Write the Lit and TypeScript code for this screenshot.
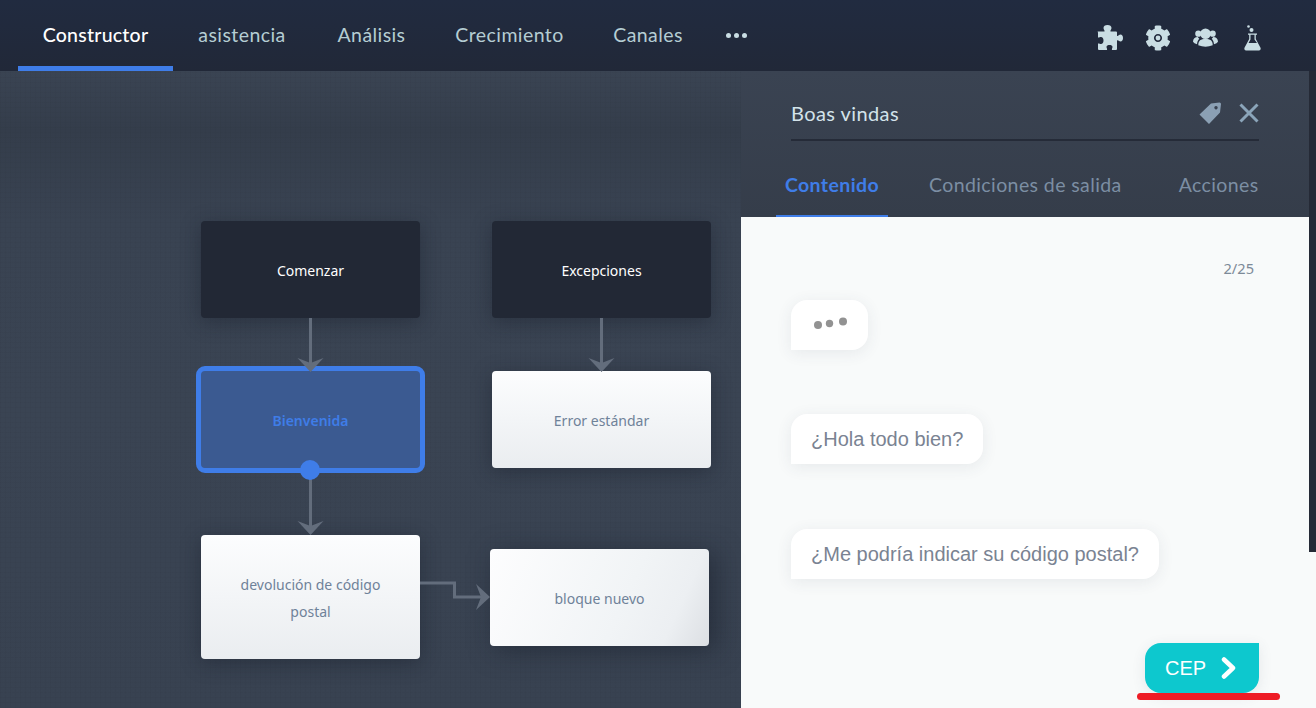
import { LitElement, html, css, svg } from "lit";
import { customElement } from "lit/decorators.js";

const PUZZLE = "M1 6.500H7.500C8 5.500 6.500 4.500 6.500 3C6.500 1 8 0 10.500 0C13 0 14.500 1 14.500 3C14.500 4.500 13 5.500 13.500 6.500H19Q20 6.500 20 7.500V11C21 11.500 22 9.500 23.500 9.500C25 9.500 26 11 26 13C26 15 25 16.500 23.500 16.500C22 16.500 21 14.800 20 15.500V24Q20 25 19 25H15C14.500 24 15.500 23 15.500 22C15.500 20.500 14 20 12.500 20C11 20 9.500 20.500 9.500 22C9.500 23 10.500 24 10 25H2Q1 25 1 24V18.500C2.500 18.500 3 19 4 19C5.500 19 6.500 17.500 6.500 15.500C6.500 13.500 5.500 12 4 12C3 12 2.500 12.500 1 12.500V7.500Q0 6.500 1 6.500Z";
const COG = "M487.4 315.7l-42.6-24.6c4.3-23.2 4.3-47 0-70.2l42.6-24.6c4.9-2.8 7.1-8.6 5.5-14-11.1-35.6-30-67.8-54.7-94.6-3.8-4.1-10-5.1-14.8-2.3L380.8 110c-17.9-15.4-38.5-27.3-60.8-35.1V25.8c0-5.6-3.9-10.5-9.4-11.7-36.7-8.2-74.3-7.8-109.2 0-5.5 1.2-9.4 6.1-9.4 11.7V75c-22.2 7.9-42.8 19.8-60.8 35.1L88.7 85.5c-4.9-2.8-11-1.9-14.8 2.3-24.7 26.7-43.6 58.9-54.7 94.6-1.7 5.4.6 11.2 5.5 14L67.3 221c-4.3 23.2-4.3 47 0 70.2l-42.6 24.6c-4.9 2.8-7.1 8.6-5.5 14 11.1 35.6 30 67.8 54.7 94.6 3.8 4.1 10 5.1 14.8 2.3l42.6-24.6c17.9 15.4 38.5 27.3 60.8 35.1v49.2c0 5.6 3.9 10.5 9.4 11.7 36.7 8.2 74.3 7.8 109.2 0 5.5-1.2 9.4-6.1 9.4-11.7v-49.2c22.2-7.9 42.8-19.8 60.8-35.1l42.6 24.6c4.9 2.8 11 1.9 14.8-2.3 24.7-26.7 43.6-58.9 54.7-94.6 1.5-5.5-.7-11.3-5.6-14.1zM256 336c-44.1 0-80-35.9-80-80s35.9-80 80-80 80 35.9 80 80-35.9 80-80 80z";

const TABS: [string, number][] = [["asistencia", 138], ["Análisis", 121], ["Crecimiento", 155], ["Canales", 122]];

const arrowHead = (x: number, y: number, rot: number) => svg`<path transform="translate(${x} ${y}) rotate(${rot})" d="M0 0L-13 -14L0 -9L13 -14Z" />`;

@customElement("app-root")
export class AppRoot extends LitElement {
  static styles = css`
    :host { display: block; width: 1316px; height: 708px; overflow: hidden; position: relative; font-family: "Noto Sans", sans-serif; }
    .nav { height: 71px; background: linear-gradient(#212b40, #212838); display: flex; align-items: stretch; padding-left: 18px; box-sizing: border-box; }
    .tab { display: flex; align-items: center; justify-content: center; font-family: "Lato", sans-serif; font-size: 19.500px; color: #b5cdd3; letter-spacing: 0.42px; box-sizing: border-box; border-bottom: 5px solid transparent; padding-top: 3px; white-space: nowrap; }
    .tab.on { color: #fff; border-bottom-color: #3f7de8; font-weight: 500; width: 155px; letter-spacing: .25px; }
    .more { display: flex; align-items: center; gap: 3px; margin-left: 17px; padding-bottom: 1px; }
    .more i { width: 5px; height: 5px; border-radius: 50%; background: #c9dde3; }
    .spacer { flex: 1; }
    .icons { display: flex; align-items: center; padding-right: 54px; padding-top: 4px; color: #c9dde3; }
    .icons svg { display: block; fill: currentColor; }
    .i-cog { margin-left: 22px; }
    .i-users { margin-left: 22px; }
    .i-flask { margin-left: 26px; }
    .main { display: flex; height: 637px; }
    .canvas { flex: 0 0 741px; position: relative; background-color: #3a4352;
      background-image:
        repeating-linear-gradient(0deg, rgba(0,0,0,.025) 0 1px, transparent 1px 5px),
        repeating-linear-gradient(90deg, rgba(0,0,0,.025) 0 1px, transparent 1px 5px),
        linear-gradient(#3a4453 0, #343d4b 60px, #394352 150px, #3a4453 340px, #384251 637px); }
    .node { position: absolute; display: flex; align-items: center; justify-content: center; text-align: center; box-sizing: border-box; width: 219px; height: 97px; border-radius: 4px; font-size: 14px; line-height: 27px; color: #6f8299; background: linear-gradient(#fcfdfe, #eaedf0); box-shadow: 0 4px 20px rgba(20,26,38,.4); padding: 2px 30px 0; }
    .node.dark { background: #222835; color: #fff; }
    .node.sel { width: 229px; height: 107px; border: 5px solid #3f7de8; border-radius: 9px; background: #3b5a91; color: #3f7de8; font-weight: 600; box-shadow: none; }
    .node.shade { background: linear-gradient(115deg, #fdfdfe 0, #f1f4f6 60%, #eceff2 82%, #dcdfe3 100%); box-shadow: 6px 4px 26px rgba(20,26,38,.5); }
    .dot { position: absolute; left: 300px; top: 389px; width: 20px; height: 20px; border-radius: 50%; background: #3f7de8; }
    .links { position: absolute; inset: 0; width: 741px; height: 637px; fill: #636d7c; }
    .links .ln { fill: none; stroke: #636d7c; stroke-width: 3; }
    .panel { flex: 1; display: flex; flex-direction: column; background: #f8fafa; min-width: 0; }
    .phead { height: 146px; background: linear-gradient(#3a4352, #353d4a); box-sizing: border-box; padding: 0 7px 0 35px; display: flex; flex-direction: column; }
    .title { margin: 0 50px 0 15px; height: 70px; border-bottom: 2px solid #252b38; display: flex; align-items: center; justify-content: space-between; box-sizing: border-box; font-family: "Lato", sans-serif; font-size: 20px; letter-spacing: .42px; color: #d3e3ea; padding-top: 16px; }
    .title .acts { display: flex; align-items: center; gap: 17px; }
    .title svg { display: block; }
    .i-tag { margin-left: -2px; }
    .ptabs { flex: 1; display: flex; align-items: stretch; font-family: "Lato", sans-serif; font-size: 19.500px; letter-spacing: .4px; color: #7c8ea3; }
    .ptab { display: flex; align-items: center; justify-content: center; padding-top: 12px; box-sizing: border-box; border-bottom: 2px solid transparent; white-space: nowrap; }
    .ptab.on { width: 112px; color: #3f7de8; font-weight: 700; border-bottom-color: #3f7de8; }
    .ptab.c { margin-left: 41px; }
    .ptab.a { margin-left: 57px; }
    .pbody { flex: 1; padding: 0 57px 0 50px; display: flex; flex-direction: column; align-items: flex-start; position: relative; }
    .count { align-self: flex-end; margin-top: 42px; font-size: 14.600px; line-height: 19px; color: #7d8a98; margin-right: 5px; }
    .bubble { box-sizing: border-box; height: 50px; background: #fff; border-radius: 16px 16px 16px 0; box-shadow: 0 3px 16px rgba(60,70,85,.09); padding: 0 20px; display: flex; align-items: center; font-family: "Liberation Sans", sans-serif; font-size: 20px; color: #7a8392; white-space: nowrap; }
    .typing { width: 77px; margin-top: 22px; padding: 0; margin-bottom: 64px; }
    .typing svg { display: block; }
    .b2 { margin-bottom: 65px; }
    .cep { position: absolute; left: 404px; top: 426px; width: 114px; height: 50px; box-sizing: border-box; background: #0dc8ce; border-radius: 16px 0 16px 16px; padding-left: 20px; display: flex; align-items: center; gap: 15px; color: #fff; font-family: "Liberation Sans", sans-serif; font-size: 20px; box-shadow: 0 3px 14px rgba(60,70,85,.1); }
    .mark { position: absolute; left: 1137px; top: 693px; width: 143px; height: 7px; border-radius: 4px; background: #ee1c25; }
    .strip { position: absolute; left: 1309px; top: 71px; width: 7px; height: 481px; background: #252a36; }
  `;

  render() {
    return html`
      <div class="nav">
        <div class="tab on">Constructor</div>
        ${TABS.map(([label, w]) => html`<div class="tab" style="width:${w}px">${label}</div>`)}
        <div class="more"><i></i><i></i><i></i></div>
        <div class="spacer"></div>
        <div class="icons">
          <svg width="26" height="25" viewBox="0 0 26 25"><path d=${PUZZLE}></path></svg>
          <svg class="i-cog" width="26" height="26" viewBox="0 0 512 512"><path fill-rule="evenodd" d=${COG}></path><circle cx="256" cy="256" r="48"></circle></svg>
          <svg class="i-users" width="25" height="20" viewBox="0 0 26 20">
            <circle cx="13" cy="5.500" r="5.500"></circle><path d="M5.500 17.500c0-5 2.500-6.500 7.500-6.500s7.500 1.500 7.500 6.500q-7.500 3-15 0Z"></path>
            <circle cx="5.500" cy="5.500" r="3.200"></circle><path d="M0 14c0-3 2-5 5-5 .5.800 1 1.300 1.500 1.700-1.500 1.500-2.200 3.500-2.300 5.800Q1 16 0 14Z"></path>
            <circle cx="20.500" cy="5.500" r="3.200"></circle><path d="M26 14c0-3-2-5-5-5-.5.800-1 1.300-1.500 1.700 1.500 1.500 2.200 3.500 2.300 5.800Q25 16 26 14Z"></path>
          </svg>
          <svg class="i-flask" width="18" height="26" viewBox="0 0 18 26">
            <circle cx="4.500" cy="1.500" r="1.300"></circle><circle cx="7.500" cy="5" r="2"></circle>
            <path d="M4 8.500h9v1.300h-1.200v4.200l4.700 8.700q.7 2.300-1.500 2.800H2q-2.200-.5-1.500-2.800l4.700-8.700V9.800H4ZM6.500 9.800v4.600L4.500 18h8.500l-2.500-3.600V9.800Z" fill-rule="evenodd"></path>
          </svg>
        </div>
      </div>
      <div class="main">
        <div class="canvas">
          <div class="node dark" style="left:201px;top:150px">Comenzar</div>
          <div class="node dark" style="left:492px;top:150px">Excepciones</div>
          <div class="node sel" style="left:196px;top:295px">Bienvenida</div>
          <div class="node" style="left:492px;top:300px">Error estándar</div>
          <div class="node" style="left:201px;top:464px;height:124px">devolución de código postal</div>
          <div class="node shade" style="left:490px;top:478px">bloque nuevo</div>
          <svg class="links" viewBox="0 1 741 637">
            <path class="ln" d="M310.500 248V296"></path>
            <path class="ln" d="M601.500 248V296"></path>
            <path class="ln" d="M310.500 405V458"></path>
            <path class="ln" d="M420 513H454.500V527H484"></path>
            ${arrowHead(310.5, 302, 0)}
            ${arrowHead(601.5, 302, 0)}
            ${arrowHead(310.5, 465, 0)}
            ${arrowHead(490, 527, -90)}
          </svg>
          <div class="dot"></div>
        </div>
        <div class="panel">
          <div class="phead">
            <div class="title">
              <span>Boas vindas</span>
              <span class="acts">
                <svg class="i-tag" width="24" height="24" viewBox="0 0 24 24"><path fill="#8ba0b4" fill-rule="evenodd" d="M13 2.500L21.500 1.500Q23 1.500 23 3L22 11.500L11 23L1.500 13.500ZM18 5a1.700 1.700 0 1 0 .01 0Z"></path></svg>
                <svg width="20" height="20" viewBox="0 0 20 20"><path d="M1.500 1.500L18.500 18.500M18.500 1.500L1.500 18.500" stroke="#8ba5ba" stroke-width="3" fill="none"></path></svg>
              </span>
            </div>
            <div class="ptabs">
              <div class="ptab on">Contenido</div>
              <div class="ptab c">Condiciones de salida</div>
              <div class="ptab a">Acciones</div>
            </div>
          </div>
          <div class="pbody">
            <div class="count">2/25</div>
            <div class="bubble typing">
              <svg width="77" height="50" viewBox="0 0 77 50" fill="#929292"><circle cx="27" cy="25" r="4"></circle><circle cx="38.500" cy="23.500" r="3.700"></circle><circle cx="52" cy="21.500" r="4"></circle></svg>
            </div>
            <div class="bubble b2">¿Hola todo bien?</div>
            <div class="bubble">¿Me podría indicar su código postal?</div>
            <div class="cep">
              <span>CEP</span>
              <svg width="16" height="22" viewBox="0 0 16 22"><path d="M3 2.500L12 11L3 19.500" fill="none" stroke="#fff" stroke-width="4.500" stroke-linecap="round" stroke-linejoin="round"></path></svg>
            </div>
          </div>
        </div>
      </div>
      <div class="strip"></div>
      <div class="mark"></div>
    `;
  }
}
